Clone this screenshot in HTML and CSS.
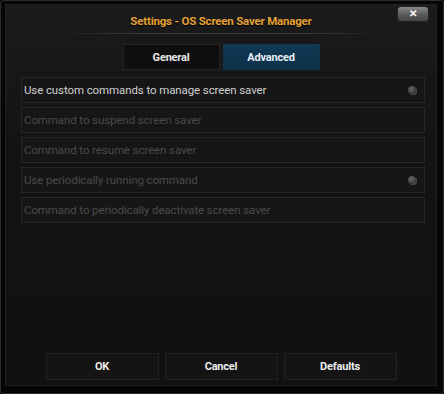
FILE: index.html
```html
<!DOCTYPE html>
<html>
<head>
<meta charset="utf-8">
<link rel="stylesheet" href="styles.css">
</head>
<body>
<div class="dialog">
  <div class="panel">
    <div class="header">
      <div class="title">Settings - OS Screen Saver Manager</div>
      <div class="close">✕</div>
    </div>
    <div class="tabs">
      <div class="tab">General</div>
      <div class="tab active">Advanced</div>
    </div>
    <div class="rows">
      <div class="row on"><span>Use custom commands to manage screen saver</span><i class="radio"></i></div>
      <div class="row"><span>Command to suspend screen saver</span></div>
      <div class="row"><span>Command to resume screen saver</span></div>
      <div class="row"><span>Use periodically running command</span><i class="radio"></i></div>
      <div class="row"><span>Command to periodically deactivate screen saver</span></div>
    </div>
    <div class="buttons">
      <div class="btn">OK</div>
      <div class="btn">Cancel</div>
      <div class="btn">Defaults</div>
    </div>
  </div>
</div>
</body>
</html>
```
FILE: styles.css
```css
html, body { margin: 0; padding: 0; background: #000; }
body { font-family: Roboto, "Liberation Sans", sans-serif; }
.dialog {
  width: 444px; height: 394px; box-sizing: border-box;
  border: 1px solid #2c2c2c; border-radius: 3px;
  padding: 3px 6px 7px 4px; background: #060606;
}
.panel {
  height: 100%; box-sizing: border-box;
  border: 1px solid #1f1f1f;
  background: linear-gradient(#1b1b1b, #131313 40%, #111 100%);
  display: flex; flex-direction: column;
}
.header {
  height: 28px; display: flex; align-items: center; justify-content: center;
  position: relative;
  border-bottom: 1px solid transparent;
  border-image: linear-gradient(90deg, transparent 12%, #3a3a3a 30%, #3a3a3a 70%, transparent 88%) 1;
}
.title {
  color: #e6a236; font-weight: bold; font-size: 11.5px; letter-spacing: -0.2px;
  text-shadow: 0 1px 1px #000; margin-top: 4px;
}
.close {
  position: absolute; right: 8px; top: 2px; width: 30px; height: 14px;
  border-radius: 3px; background: linear-gradient(#8a8a8a, #5a5a5a 55%, #444);
  color: #fff; font-size: 10px; font-weight: bold; text-align: center; line-height: 14px;
  box-shadow: 0 0 0 1px #222;
}
.tabs { display: flex; justify-content: center; gap: 3px; margin-top: 10px; }
.tab {
  width: 97px; height: 26px; box-sizing: border-box; display: flex; align-items: center; justify-content: center;
  color: #e8e8e8; font-weight: bold; font-size: 11px; letter-spacing: -0.2px;
  background: #0e0e0e; border: 1px solid #252525;
}
.tab.active { background: linear-gradient(#103a55, #0d3048); border-color: #10344c; color: #e4eef4; }
.rows { display: flex; flex-direction: column; gap: 4px; margin: 7px 11px 0 15px; }
.row {
  height: 26px; box-sizing: border-box; border: 1px solid #262626; background: #161616;
  display: flex; align-items: center; justify-content: space-between; padding: 0 8px 0 2px;
  font-size: 11.5px; color: #4a4a4a; letter-spacing: -0.1px;
}
.row.on { color: #cfcfcf; }
.radio {
  width: 8px; height: 8px; border-radius: 50%;
  background: radial-gradient(circle at 40% 35%, #666, #3a3a3a 70%);
  box-shadow: 1px 1px 0 #555;
}
.buttons { margin-top: auto; margin-bottom: 5px; display: flex; justify-content: center; gap: 6px; }
.btn {
  width: 113px; height: 27px; box-sizing: border-box; border: 1px solid #222; background: #141414;
  display: flex; align-items: center; justify-content: center;
  color: #eee; font-weight: bold; font-size: 11px; letter-spacing: -0.2px;
}
```
